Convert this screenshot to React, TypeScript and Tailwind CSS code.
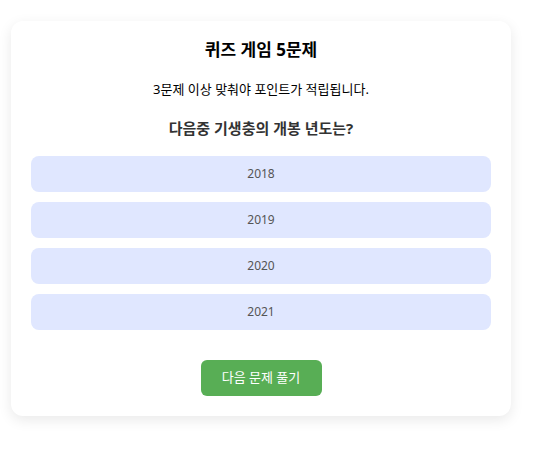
import React from "react";

const options = ["2018", "2019", "2020", "2021"];

export default function App() {
  return (
    <div
      className="min-h-[460px] bg-white pl-[11px] pt-[21px]"
      style={{ fontFamily: '"Noto Sans", "Noto Sans CJK KR", sans-serif' }}
    >
      <div className="w-[500px] rounded-xl bg-white p-5 shadow-[0_4px_14px_rgba(0,0,0,0.09)]">
        <h2 className="mt-0 text-center text-[17px] font-bold leading-[18px] text-black">
          퀴즈 게임 5문제
        </h2>
        <p className="mt-[22px] text-center text-[13px] leading-[16px] text-black">
          3문제 이상 맞춰야 포인트가 적립됩니다.
        </p>
        <h3 className="mt-[22px] text-center text-[15px] font-bold leading-[18px] text-[#333]">
          다음중 기생충의 개봉 년도는?
        </h3>
        <div className="mt-[19px] flex flex-col gap-[10px]">
          {options.map((o) => (
            <button
              key={o}
              className="h-9 w-full rounded-lg bg-[#e0e7ff] text-[12px] text-[#555]"
            >
              {o}
            </button>
          ))}
        </div>
        <div className="mt-[30px] flex justify-center">
          <button className="h-9 w-[121px] rounded-md bg-[#58ae55] text-[13px] text-white">
            다음 문제 풀기
          </button>
        </div>
      </div>
    </div>
  );
}
